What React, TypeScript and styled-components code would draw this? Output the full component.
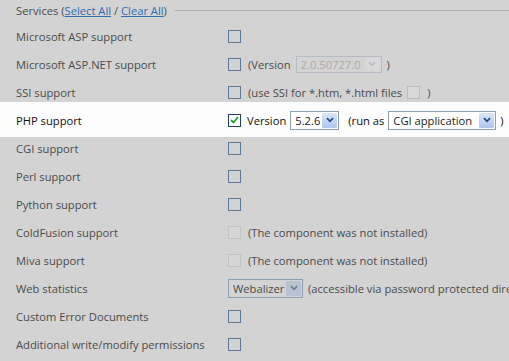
import React from 'react';
import styled, { createGlobalStyle } from 'styled-components';

const GlobalStyle = createGlobalStyle`
  body {
    margin: 0;
    background: #d3d3d3;
    font-family: "Open Sans", "Noto Sans", sans-serif;
    font-size: 11.2px;
    color: #4b4b4b;
  }
`;

const Panel = styled.div`
  width: 509px;
  height: 361px;
  overflow: hidden;
  background: #d3d3d3;
`;

const Header = styled.div`
  display: flex;
  align-items: center;
  gap: 8px;
  height: 23px;
  padding-left: 16px;
  margin-top: -1px;
`;

const HeaderLine = styled.div`
  flex: 1;
  border-top: 1px solid #a9aeb3;
`;

const Link = styled.a`
  color: #2f6db3;
  text-decoration: underline;
  cursor: pointer;
`;

const Row = styled.div<{ $active?: boolean }>`
  display: grid;
  grid-template-columns: 212px 1fr;
  align-items: center;
  height: 28px;
  padding-left: 16px;
  white-space: nowrap;
  color: ${(p) => (p.$active ? '#111' : '#4b4b4b')};
  background: ${(p) => (p.$active ? '#fdfdfd' : 'transparent')};
  ${(p) =>
    p.$active &&
    `
    margin: -4px 0 -3px;
    padding-top: 4px;
    padding-bottom: 3px;
    position: relative;
  `}
`;

const Control = styled.div<{ $gap?: number }>`
  display: flex;
  align-items: center;
  gap: ${(p) => p.$gap ?? 5}px;
  overflow: hidden;
`;

const Box = styled.span<{ $state?: 'normal' | 'checked' | 'disabled' }>`
  display: inline-flex;
  align-items: center;
  justify-content: center;
  box-sizing: border-box;
  width: 13px;
  height: 13px;
  flex: none;
  border: 1px solid
    ${(p) =>
      p.$state === 'checked' ? '#1f3f6d' : p.$state === 'disabled' ? '#c2c2c2' : '#5f7a97'};
  background: ${(p) =>
    p.$state === 'checked' ? '#fff' : p.$state === 'disabled' ? '#d6d6d6' : '#d1d4d7'};
  margin-right: 2px;
`;

const SmallBox = styled(Box)`
  margin: 0 2px 0 0;
  border-color: #bdbdbd;
  background: #d8d8d8;
`;

type Variant = 'active' | 'disabled' | 'plain';

const SelectBox = styled.span<{ $variant: Variant; $w: number }>`
  display: inline-flex;
  align-items: center;
  justify-content: space-between;
  flex: none;
  box-sizing: border-box;
  width: ${(p) => p.$w}px;
  height: ${(p) => (p.$variant === 'disabled' ? 17 : 19)}px;
  padding: 0 1px 0 4px;
  border: 1px solid ${(p) => (p.$variant === 'disabled' ? '#b4bcc6' : '#8d9db3')};
  background: ${(p) => (p.$variant === 'active' ? '#fff' : '#d3d3d3')};
  color: ${(p) =>
    p.$variant === 'disabled' ? '#ababab' : p.$variant === 'plain' ? '#4b4b4b' : '#222'};
`;

const Arrow = styled.span<{ $variant: Variant }>`
  display: inline-flex;
  align-items: center;
  justify-content: center;
  width: 15px;
  height: ${(p) => (p.$variant === 'disabled' ? 13 : 15)}px;
  box-sizing: border-box;
  border-radius: 1px;
  background: ${(p) =>
    p.$variant === 'active'
      ? 'linear-gradient(#dbe6fb, #aec5f0)'
      : p.$variant === 'disabled'
      ? '#d9d9d9'
      : '#b9c2cf'};
`;

const Note = styled.span<{ $gapLeft?: number }>`
  margin-left: ${(p) => p.$gapLeft ?? 0}px;
`;

function Select({ value, width, variant }: { value: string; width: number; variant: Variant }) {
  const stroke = variant === 'active' ? '#26487f' : variant === 'disabled' ? '#b9bec6' : '#6d7d96';
  return (
    <SelectBox $variant={variant} $w={width}>
      <span>{value}</span>
      <Arrow $variant={variant}>
        <svg width="8" height="6" viewBox="0 0 8 6">
          <path d="M1 1.2 L4 4.3 L7 1.2" fill="none" stroke={stroke} strokeWidth="1.7" />
        </svg>
      </Arrow>
    </SelectBox>
  );
}

function Check() {
  return (
    <svg width="9" height="8" viewBox="0 0 9 8">
      <path d="M1 4 L3.5 6.5 L8 1" fill="none" stroke="#23a32e" strokeWidth="1.8" />
    </svg>
  );
}

export default function App() {
  return (
    <Panel>
      <GlobalStyle />
      <Header>
        <span>
          Services (<Link>Select All</Link> / <Link>Clear All</Link>)
        </span>
        <HeaderLine />
      </Header>
      <Row>
        <span>Microsoft ASP support</span>
        <Control>
          <Box />
        </Control>
      </Row>
      <Row>
        <span>Microsoft ASP.NET support</span>
        <Control>
          <Box />
          <Note>(Version</Note>
          <Select value="2.0.50727.0" width={86} variant="disabled" />
          <Note>)</Note>
        </Control>
      </Row>
      <Row>
        <span>SSI support</span>
        <Control>
          <Box />
          <Note>(use SSI for *.htm, *.html files</Note>
          <SmallBox />
          <Note>)</Note>
        </Control>
      </Row>
      <Row $active>
        <span>PHP support</span>
        <Control $gap={4}>
          <Box $state="checked">
            <Check />
          </Box>
          <Note>Version</Note>
          <Select value="5.2.6" width={49} variant="active" />
          <Note $gapLeft={5}>(run as</Note>
          <Select value="CGI application" width={108} variant="active" />
          <Note>)</Note>
        </Control>
      </Row>
      <Row>
        <span>CGI support</span>
        <Control>
          <Box />
        </Control>
      </Row>
      <Row>
        <span>Perl support</span>
        <Control>
          <Box />
        </Control>
      </Row>
      <Row>
        <span>Python support</span>
        <Control>
          <Box />
        </Control>
      </Row>
      <Row>
        <span>ColdFusion support</span>
        <Control>
          <Box $state="disabled" />
          <Note>(The component was not installed)</Note>
        </Control>
      </Row>
      <Row>
        <span>Miva support</span>
        <Control>
          <Box $state="disabled" />
          <Note>(The component was not installed)</Note>
        </Control>
      </Row>
      <Row>
        <span>Web statistics</span>
        <Control>
          <Select value="Webalizer" width={75} variant="plain" />
          <Note>(accessible via password protected directory)</Note>
        </Control>
      </Row>
      <Row>
        <span>Custom Error Documents</span>
        <Control>
          <Box />
        </Control>
      </Row>
      <Row>
        <span>Additional write/modify permissions</span>
        <Control>
          <Box />
        </Control>
      </Row>
    </Panel>
  );
}
